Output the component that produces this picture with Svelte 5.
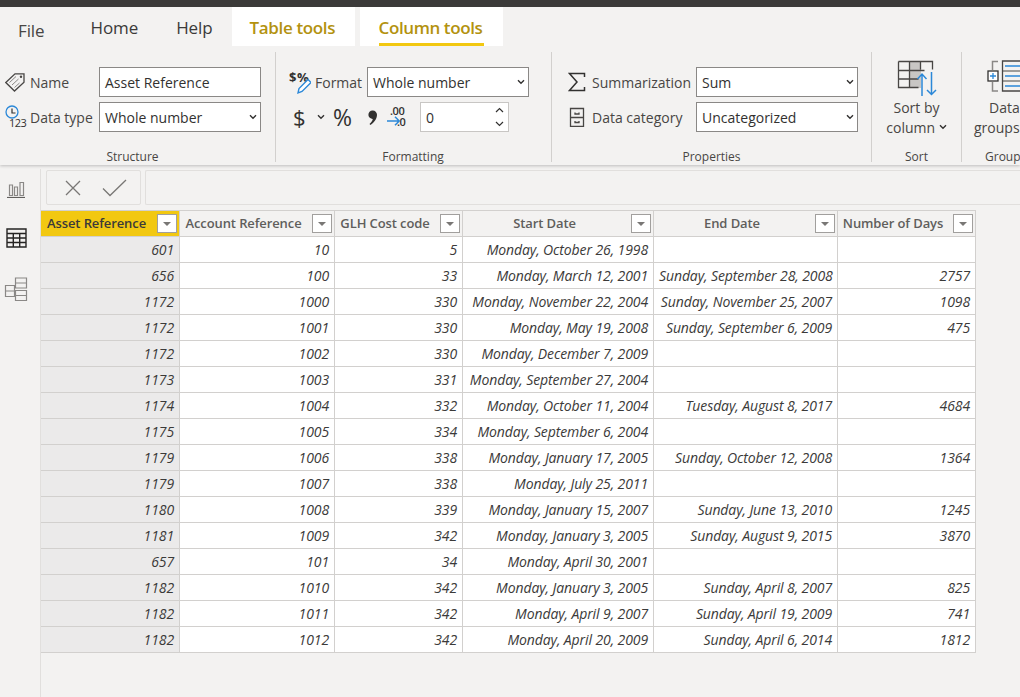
<script>
  const cols = [
    { label: 'Asset Reference', key: 'a' },
    { label: 'Account Reference', key: 'b' },
    { label: 'GLH Cost code', key: 'c' },
    { label: 'Start Date', key: 'd' },
    { label: 'End Date', key: 'e' },
    { label: 'Number of Days', key: 'f' }
  ];
  const raw = [
    ['601','10','5','Monday, October 26, 1998','',''],
    ['656','100','33','Monday, March 12, 2001','Sunday, September 28, 2008','2757'],
    ['1172','1000','330','Monday, November 22, 2004','Sunday, November 25, 2007','1098'],
    ['1172','1001','330','Monday, May 19, 2008','Sunday, September 6, 2009','475'],
    ['1172','1002','330','Monday, December 7, 2009','',''],
    ['1173','1003','331','Monday, September 27, 2004','',''],
    ['1174','1004','332','Monday, October 11, 2004','Tuesday, August 8, 2017','4684'],
    ['1175','1005','334','Monday, September 6, 2004','',''],
    ['1179','1006','338','Monday, January 17, 2005','Sunday, October 12, 2008','1364'],
    ['1179','1007','338','Monday, July 25, 2011','',''],
    ['1180','1008','339','Monday, January 15, 2007','Sunday, June 13, 2010','1245'],
    ['1181','1009','342','Monday, January 3, 2005','Sunday, August 9, 2015','3870'],
    ['657','101','34','Monday, April 30, 2001','',''],
    ['1182','1010','342','Monday, January 3, 2005','Sunday, April 8, 2007','825'],
    ['1182','1011','342','Monday, April 9, 2007','Sunday, April 19, 2009','741'],
    ['1182','1012','342','Monday, April 20, 2009','Sunday, April 6, 2014','1812']
  ];
</script>

{#snippet chevron()}
  <svg class="chev" width="8" height="6" viewBox="0 0 8 6"><path d="M1 1.200l3 3 3-3" fill="none" stroke="#323130" stroke-width="1.400"/></svg>
{/snippet}

{#snippet drop(text)}
  <div class="field select"><span class="ftext">{text}</span>{@render chevron()}</div>
{/snippet}

<div class="page">
  <div class="topbar"></div>
  <nav class="tabs">
    <span class="tab file">File</span>
    <span class="tab home">Home</span>
    <span class="tab help">Help</span>
    <span class="tab ctx table-tools">Table tools</span>
    <span class="tab ctx col-tools"><b>Column tools</b></span>
  </nav>

  <section class="ribbon">
    <div class="group g1">
      <div class="gbody rows">
        <div class="row">
          <svg class="ic" width="24" height="24" viewBox="0 0 24 24"><path d="M0.800 12.500L10 3.800h9v8.400L9.500 21z" fill="none" stroke="#484644" stroke-width="1.300"/><path d="M4.500 12.500l6.500-6M7 15l6.500-6M9.500 17.500l5-4.500" stroke="#8a8886" fill="none"/><circle cx="16" cy="6.800" r="1.200" fill="#484644"/></svg>
          <span class="lbl">Name</span>
          <div class="field"><span class="ftext">Asset Reference</span></div>
        </div>
        <div class="row">
          <svg class="ic" width="24" height="28" viewBox="0 -2 24 28"><circle cx="7" cy="7" r="6" fill="none" stroke="#2b88d8" stroke-width="1.300"/><path d="M7 3.500V8H10.500" fill="none" stroke="#323130" stroke-width="1.200"/><text x="4" y="21.500" class="tiny">123</text></svg>
          <span class="lbl">Data type</span>
          {@render drop('Whole number')}
        </div>
      </div>
      <div class="cap">Structure</div>
    </div>

    <div class="group g2">
      <div class="gbody rows">
        <div class="row">
          <svg class="ic2" width="22" height="28" viewBox="0 -2 22 28"><text x="0" y="12" class="sym">$</text><text x="8" y="12" class="sym">%</text><path d="M9 23l1-4.500 9-9 3 3-9 9z" fill="#fff" stroke="#2b88d8" stroke-width="1.400"/></svg>
          <span class="lbl">Format</span>
          {@render drop('Whole number')}
        </div>
        <div class="row tools">
          <span class="dollar">$</span>
          {@render chevron()}
          <span class="pct">%</span>
          <svg class="comma" width="12" height="18" viewBox="0 0 12 18"><path d="M5.500 1.500a4.200 4.200 0 0 1 4.500 4.300c0 4-3 8-6.500 10.200l-1-1c1.800-1.500 3-3.300 3.300-5A4.200 4.200 0 1 1 5.500 1.500z" fill="#323130"/></svg>
          <svg class="dec" width="21" height="28" viewBox="0 -3 21 28"><text x="3" y="9" class="tiny2">.00</text><text x="10" y="20" class="tiny2">.0</text><path d="M0 15h12M8 10.800l4.200 4.200L8 19.200" fill="none" stroke="#2b88d8" stroke-width="1.500"/></svg>
          <div class="num">
            <span class="ftext">0</span>
            <svg width="9" height="20" viewBox="0 0 9 20"><path d="M1 5l3.500-3.500L8 5M1 15l3.500 3.500L8 15" fill="none" stroke="#323130" stroke-width="1.200"/></svg>
          </div>
        </div>
      </div>
      <div class="cap">Formatting</div>
    </div>

    <div class="group g3">
      <div class="gbody rows">
        <div class="row">
          <svg class="ic3" width="18" height="20" viewBox="0 0 18 20"><path d="M16.500 5V1.500H1.500L9 10 1.500 18.500h15V15" fill="none" stroke="#323130" stroke-width="1.500"/></svg>
          <span class="lbl">Summarization</span>
          {@render drop('Sum')}
        </div>
        <div class="row">
          <svg class="ic3" width="18" height="20" viewBox="0 0 18 20"><path d="M2.500 1.500h13v18h-13zM2.500 10.500h13M7 5.500v1.500h4V5.500M7 14v1.500h4V14" fill="none" stroke="#484644" stroke-width="1.300"/></svg>
          <span class="lbl">Data category</span>
          {@render drop('Uncategorized')}
        </div>
      </div>
      <div class="cap">Properties</div>
    </div>

    <div class="group g4">
      <div class="gbody big">
        <svg width="40" height="36" viewBox="0 0 40 36">
          <rect x="13" y="1" width="11" height="27" fill="#c8c6c4"/>
          <path d="M1.500 1.500h34v8M1.500 1.500v26h20M1.500 10.500h26M1.500 19h20M12.500 1.500v26M23.500 1.500v8" fill="none" stroke="#484644" stroke-width="1.300"/>
          <path d="M25 36V14M20.500 19l4.500-5 4.500 5M34.500 12v22.500M30 30l4.500 4.500L39 30" fill="none" stroke="#2b88d8" stroke-width="1.500"/>
        </svg>
        <span class="bl">Sort by</span>
        <span class="bl">column {@render chevron()}</span>
      </div>
      <div class="cap">Sort</div>
    </div>

    <div class="group g5">
      <div class="gbody big left">
        <svg width="34" height="36" viewBox="0 0 34 36">
          <path d="M11 1.500H5.500V10M5.500 22v9h5.500" fill="none" stroke="#8a8886" stroke-width="1.500"/>
          <rect x="1" y="11" width="10" height="10" fill="#fff" stroke="#323130" stroke-width="1.300"/>
          <path d="M3 16h6M6 13v6" stroke="#2b88d8" stroke-width="1.300"/>
          <path d="M15.500 1h19v30h-19z" fill="none" stroke="#484644" stroke-width="1.300"/>
          <path d="M18 6h16M18 16h16M18 26h16" stroke="#2b88d8" stroke-width="1.500"/>
          <path d="M15.500 11h19M15.500 21h19" stroke="#484644" stroke-width="1.200"/>
        </svg>
        <span class="bl d1">Data</span>
        <span class="bl d2">groups</span>
      </div>
      <div class="cap c5">Groups</div>
    </div>
  </section>

  <div class="main">
    <aside class="rail">
      <svg width="18" height="18" viewBox="0 0 18 18"><path d="M0 17.500h18" stroke="#605e5c" stroke-width="1.200"/><path d="M2.500 5h3v10.500h-3zM7.500 7h3v8.500h-3zM13 2.500h3.500v13H13z" fill="none" stroke="#8a8886" stroke-width="1.200"/></svg>
      <svg width="21" height="20" viewBox="0 0 21 20"><path d="M1 1h19v18H1zM1 5.500h19M1 10h19M1 14.500h19M7.300 5.500V19M13.700 5.500V19" fill="none" stroke="#252423" stroke-width="1.400"/></svg>
      <svg class="model" width="24" height="24" viewBox="0 0 24 24"><path d="M1.500 8.500h9v11h-9zM1.500 14h9M11.500 6V1h11v10h-11zM11.500 13.500h11v10h-11zM11.500 6h11M11.500 18.500h11" fill="none" stroke="#8a8886" stroke-width="1.200"/></svg>
    </aside>

    <div class="content">
      <div class="fbar">
        <div class="fbtns">
          <svg width="16" height="16" viewBox="0 0 16 16"><path d="M1 1l14 14M15 1L1 15" stroke="#797775" stroke-width="1.300"/></svg>
          <svg width="25" height="18" viewBox="0 0 25 18"><path d="M1 9.500L8 16.500 24 1" fill="none" stroke="#797775" stroke-width="1.300"/></svg>
        </div>
        <div class="finput"></div>
      </div>

      <table>
        <colgroup>
          <col class="w1" /><col class="w2" /><col class="w3" /><col class="w4" /><col class="w5" /><col class="w6" />
        </colgroup>
        <thead>
          <tr>
            {#each cols as c, i}
              <th class:sel={i === 0}>
                <div class="hd">
                  <span class="ht">{c.label}</span>
                  <span class="fb"><i></i></span>
                </div>
              </th>
            {/each}
          </tr>
        </thead>
        <tbody>
          {#each raw as r}
            <tr>
              {#each r as v, i}
                <td class:rowh={i === 0}>{v}</td>
              {/each}
            </tr>
          {/each}
        </tbody>
      </table>
    </div>
  </div>
</div>

<style>
  :global(body) { margin: 0; background: #f3f2f1; }
  .page {
    width: 1020px; height: 697px; overflow: hidden; display: flex; flex-direction: column;
    background: #f3f2f1; color: #323130;
    font-family: "Open Sans", "Noto Sans", sans-serif; font-size: 14px;
  }
  .topbar { height: 7px; background: #3b3a39; flex: none; }

  .tabs { height: 39px; flex: none; display: flex; align-items: stretch; font-size: 17px; }
  .tab { display: flex; align-items: center; height: 39px; padding-top: 2px; box-sizing: border-box; letter-spacing: -0.1px; }
  .file { margin-left: 18px; padding-top: 8px; color: #484644; }
  .home { margin-left: 46px; color: #3b3a39; }
  .help { margin-left: 38px; color: #3b3a39; }
  .ctx { background: #fff; color: #b3920f; }
  .table-tools { margin-left: 19px; width: 123px; padding-left: 18px; font-weight: 600; letter-spacing: -0.35px; }
  .col-tools { margin-left: 5px; width: 143px; padding: 0 0 0 19px; align-items: stretch; font-weight: 600; letter-spacing: -0.4px; }
  .col-tools b { font-weight: 600; display: flex; align-items: center; height: 39px; width: 105px; box-sizing: border-box; padding-top: 5px; border-bottom: 3px solid #f2c811; white-space: nowrap; }

  .ribbon {
    height: 119px; flex: none; display: flex; box-sizing: border-box; padding-top: 6px;
    background: #f3f2f1; box-shadow: 0 1px 3px rgba(0,0,0,.22); position: relative;
    overflow: hidden; margin-bottom: 4px; clip-path: inset(0 0 -6px 0);
  }
  .group { height: 110px; display: flex; flex-direction: column; border-right: 1px solid #d2d0ce; box-sizing: border-box; flex: none; }
  .g1 { width: 276px; padding-right: 10px; }
  .g2 { width: 276px; padding-right: 1px; }
  .g3 { width: 320px; }
  .g4 { width: 90px; }
  .g5 { width: 58px; border-right: 0; }
  .gbody { flex: 1; min-height: 0; }
  .cap { height: 10px; line-height: 10px; text-align: center; font-size: 12px; color: #484644; margin-bottom: 0; }
  .c5 { text-align: left; padding-left: 23px; white-space: nowrap; }

  .rows { padding-top: 15px; display: flex; flex-direction: column; gap: 5px; }
  .row { display: flex; align-items: center; height: 30px; }
  .lbl { font-size: 14px; color: #484644; white-space: nowrap; }
  .field {
    width: 162px; height: 30px; box-sizing: border-box; border: 1px solid #8a8886; background: #fff;
    display: flex; align-items: center; justify-content: space-between; padding: 0 3px 0 5px;
    font-size: 14px; color: #323130; flex: none;
  }
  .ftext { padding-top: 1px; }
  .chev { flex: none; }

  .g1 .row { padding-left: 5px; }
  .g1 .ic { width: 24px; flex: none; }
  .g1 .lbl { margin-left: 1px; width: 69px; }
  .g2 .row { padding-left: 13px; }
  .g2 .ic2 { flex: none; }
  .g2 .lbl { margin-left: 4px; width: 52px; }
  .dollar { font-size: 22px; width: 12px; margin-left: 4px; color: #323130; }
  .tools .chev { margin-left: 12px; }
  .pct { font-size: 23px; margin-left: 8px; width: 22px; color: #323130; }
  .comma { margin-left: 12px; margin-top: 2px; flex: none; }
  .dec { margin-left: 8px; flex: none; }
  .num {
    margin-left: 12px; width: 89px; height: 30px; box-sizing: border-box; border: 1px solid #c8c6c4; background: #fff; flex: none;
    display: flex; align-items: center; justify-content: space-between; padding: 0 4px 0 5px; font-size: 14px;
  }
  .g3 .row { padding-left: 16px; }
  .g3 .ic3 { flex: none; }
  .g3 .lbl { margin-left: 6px; width: 104px; }
  .tiny { font-size: 11px; fill: #323130; font-family: "Open Sans", sans-serif; letter-spacing: -0.5px; }
  .tiny2 { font-size: 11px; fill: #323130; font-weight: 600; font-family: "Open Sans", sans-serif; letter-spacing: -0.4px; }
  .sym { font-size: 13px; font-weight: 700; fill: #323130; font-family: "Open Sans", sans-serif; }

  .big { display: flex; flex-direction: column; align-items: center; padding-top: 8px; }
  .big svg:first-child { flex: none; margin-bottom: 2px; }
  .bl { font-size: 14px; line-height: 20px; color: #484644; white-space: nowrap; }
  .bl .chev { vertical-align: 1px; }
  .left { align-items: flex-start; padding-left: 25px; }
  .d1 { margin-left: 2px; }
  .d2 { margin-left: -13px; }

  .main { flex: 1; min-height: 0; display: flex; }
  .rail {
    width: 41px; flex: none; box-sizing: border-box; border-right: 1px solid #e1dfdd;
    display: flex; flex-direction: column; align-items: center; padding: 11px 8px 0 0; gap: 30px;
  }
  .model { margin-top: -1px; }
  .content { flex: 1; min-width: 0; padding-top: 1px; }
  .fbar { height: 35px; display: flex; gap: 4px; padding-left: 5px; margin-bottom: 5px; }
  .fbtns {
    width: 95px; box-sizing: border-box; border: 1px solid #e1dfdd; border-radius: 2px;
    display: flex; align-items: center; gap: 21px; padding-left: 18px;
  }
  .finput { flex: 1; box-sizing: border-box; border: 1px solid #e1dfdd; border-right: 0; border-radius: 2px 0 0 2px; }

  table { border-collapse: separate; border-spacing: 0; table-layout: fixed; width: 935px; font-size: 13px; }
  .w1 { width: 139px; } .w2 { width: 155px; } .w3 { width: 128px; }
  .w4 { width: 191px; } .w5 { width: 184px; } .w6 { width: 138px; }
  th {
    height: 27px; padding: 0; box-sizing: border-box; background: #f3f2f1; font-weight: 600; color: #605e5c;
    border-right: 1px solid #d2d0ce; border-top: 1px solid #d2d0ce; border-bottom: 1px solid #d2d0ce;
  }
  th.sel { background: #f2c811; color: #3b3a39; }
  .hd { display: flex; align-items: center; height: 100%; padding: 0 2px 0 1px; }
  .ht { flex: 1; text-align: center; white-space: nowrap; letter-spacing: -0.1px; padding-bottom: 2px; }
  .fb {
    width: 20px; height: 19px; box-sizing: border-box; flex: none; background: #fff; border: 1px solid #a19f9d;
    display: flex; align-items: center; justify-content: center; margin-left: 6px;
  }
  .fb i { display: block; width: 0; height: 0; border: 4px solid transparent; border-top: 4px solid #797775; border-bottom: 0; }
  td {
    height: 26px; padding: 0 5px 0 5px; box-sizing: border-box; background: #fff; text-align: right; font-style: italic; font-size: 14px;
    color: #3b3a39; white-space: nowrap; overflow: hidden;
    border-right: 1px solid #d2d0ce; border-bottom: 1px solid #d2d0ce; letter-spacing: -0.1px;
  }
  td.rowh { background: #ebeaea; }
</style>
